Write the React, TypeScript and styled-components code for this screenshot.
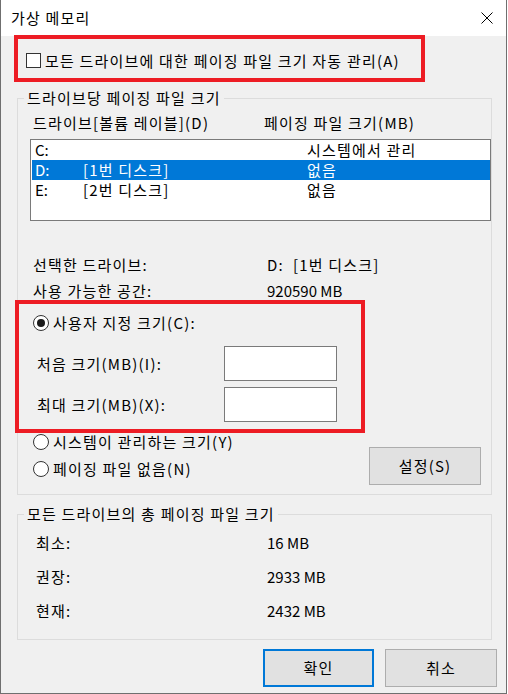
import { Fragment } from "react";
import styled, { createGlobalStyle } from "styled-components";

const GlobalStyle = createGlobalStyle`
  html, body {
    margin: 0;
    padding: 0;
    background: #ffffff;
  }
  body {
    font-family: "Noto Sans CJK KR", "Noto Sans", sans-serif;
    font-size: 15px;
    letter-spacing: 1.2px;
    color: #000;
  }
`;

const Window = styled.div`
  position: relative;
  width: 507px;
  height: 694px;
  box-sizing: border-box;
  border: 1px solid #6f6f6f;
  border-top: none;
  background: #f0f0f0;
  display: flex;
  flex-direction: column;
`;

const TitleBar = styled.div`
  height: 36px;
  flex-shrink: 0;
  background: #ffffff;
  display: flex;
  align-items: center;
  justify-content: space-between;
  padding: 0 13px 0 10px;
  line-height: 20px;
`;

const Body = styled.div`
  flex: 1;
  padding: 14px 0 0 16px;
  line-height: 20px;
`;

// numbers keep their natural width; only hangul runs get the extra spacing
const Num = styled.span`
  letter-spacing: 0;
`;

const CheckRow = styled.label`
  display: flex;
  align-items: center;
  height: 21px;
  padding-left: 9px;
  gap: 4px;
`;

const CheckBox = styled.span`
  width: 15px;
  height: 15px;
  box-sizing: border-box;
  border: 1px solid #333;
  background: #fff;
`;

const GroupBox = styled.fieldset<{ $top: number }>`
  margin: ${({ $top }) => $top}px 0 0;
  width: 475px;
  box-sizing: border-box;
  border: 1px solid #dcdcdc;
  padding: 0;
  min-width: 0;
`;

const Legend = styled.legend`
  padding: 0 3px;
  margin-left: 6px;
  line-height: 20px;
`;

const GroupBody = styled.div<{ $pad: string }>`
  padding: ${({ $pad }) => $pad};
`;

const HeaderRow = styled.div`
  display: grid;
  grid-template-columns: 231px 1fr;
  height: 20px;
`;

const ListBox = styled.div`
  margin: 6px 0 0 -3px;
  width: 461px;
  height: 82px;
  box-sizing: border-box;
  border: 1px solid #7a7a7a;
  background: #fff;
  padding: 0 0 0 1px;
`;

const ListRow = styled.div<{ $selected?: boolean }>`
  display: grid;
  grid-template-columns: 48px 224px 1fr;
  height: 20px;
  padding-left: 3px;
  background: ${({ $selected }) => ($selected ? "#0078d7" : "transparent")};
  color: ${({ $selected }) => ($selected ? "#fff" : "#000")};
`;

const InfoGrid = styled.div`
  margin-top: 31px;
  display: grid;
  grid-template-columns: 234px 1fr;
  grid-auto-rows: 26px;
  align-items: center;
`;

const RadioRow = styled.label<{ $h: number }>`
  display: flex;
  align-items: center;
  height: ${({ $h }) => $h}px;
  gap: 4px;
`;

const RadioDot = styled.span<{ $checked?: boolean }>`
  width: 16px;
  height: 16px;
  box-sizing: border-box;
  border-radius: 50%;
  border: 1px solid #333;
  background: #fff;
  display: flex;
  align-items: center;
  justify-content: center;

  &::after {
    content: "";
    width: 8px;
    height: 8px;
    border-radius: 50%;
    background: ${({ $checked }) => ($checked ? "#1a1a1a" : "transparent")};
  }
`;

const CustomBlock = styled.div`
  margin-top: 6px;
`;

const FieldRow = styled.div<{ $top: number }>`
  display: grid;
  grid-template-columns: 191px 113px;
  align-items: center;
  margin-top: ${({ $top }) => $top}px;
`;

const FieldLabel = styled.span`
  padding-left: 4px;
`;

const SizeInput = styled.input`
  width: 113px;
  height: 35px;
  box-sizing: border-box;
  border: 1px solid #7a7a7a;
  background: #fff;
  outline: none;
  font: inherit;
`;

const LowerRow = styled.div`
  display: flex;
  justify-content: space-between;
  margin: 10px 10px 9px 0;
`;

const RadioCol = styled.div`
  display: flex;
  flex-direction: column;
  gap: 7px;
`;

const Button = styled.button<{ $w: number; $primary?: boolean }>`
  width: ${({ $w }) => $w}px;
  height: 38px;
  box-sizing: border-box;
  background: #e1e1e1;
  border: ${({ $primary }) => ($primary ? "2px solid #0078d7" : "1px solid #adadad")};
  font: inherit;
  letter-spacing: inherit;
  color: #000;
  padding: 0;
`;

const SetButton = styled(Button)`
  margin-top: 15px;
`;

const TotalGrid = styled.div`
  padding: 9px 0 18px 18px;
  display: grid;
  grid-template-columns: 231px 1fr;
  grid-auto-rows: 20px;
  row-gap: 14px;
`;

const ButtonRow = styled.div`
  display: flex;
  justify-content: flex-end;
  gap: 11px;
  margin-top: 9px;
  padding-right: 9px;
`;

const RedBox = styled.div<{ $l: number; $t: number; $w: number; $h: number }>`
  position: absolute;
  left: ${({ $l }) => $l}px;
  top: ${({ $t }) => $t}px;
  width: ${({ $w }) => $w}px;
  height: ${({ $h }) => $h}px;
  box-sizing: border-box;
  border: 4px solid #ed1c24;
  pointer-events: none;
`;

const CloseIcon = () => (
  <svg width="12" height="12" viewBox="0 0 12 12">
    <path d="M0.5 0.5 L11.5 11.5 M11.5 0.5 L0.5 11.5" stroke="#000" strokeWidth="1" fill="none" />
  </svg>
);

const drives = [
  { letter: "C:", label: "", size: "시스템에서 관리" },
  { letter: "D:", label: "[1번 디스크]", size: "없음", selected: true },
  { letter: "E:", label: "[2번 디스크]", size: "없음" },
];

const totals = [
  ["최소:", "16 MB"],
  ["권장:", "2933 MB"],
  ["현재:", "2432 MB"],
];

export default function App() {
  return (
    <>
      <GlobalStyle />
      <Window>
        <TitleBar>
          <span>가상 메모리</span>
          <CloseIcon />
        </TitleBar>
        <Body>
          <CheckRow>
            <CheckBox />
            모든 드라이브에 대한 페이징 파일 크기 자동 관리(A)
          </CheckRow>

          <GroupBox $top={17}>
            <Legend>드라이브당 페이징 파일 크기</Legend>
            <GroupBody $pad="5px 0 0 15px">
              <HeaderRow>
                <span>드라이브[볼륨 레이블](D)</span>
                <span>페이징 파일 크기(MB)</span>
              </HeaderRow>
              <ListBox>
                {drives.map((d) => (
                  <ListRow key={d.letter} $selected={d.selected}>
                    <Num>{d.letter}</Num>
                    <span>{d.label}</span>
                    <span>{d.size}</span>
                  </ListRow>
                ))}
              </ListBox>
              <InfoGrid>
                <span>선택한 드라이브:</span>
                <span>D:&nbsp;&nbsp;[1번 디스크]</span>
                <span>사용 가능한 공간:</span>
                <Num>920590 MB</Num>
              </InfoGrid>
              <CustomBlock>
                <RadioRow $h={26}>
                  <RadioDot $checked />
                  사용자 지정 크기(C):
                </RadioRow>
                <FieldRow $top={10}>
                  <FieldLabel>처음 크기(MB)(I):</FieldLabel>
                  <SizeInput />
                </FieldRow>
                <FieldRow $top={6}>
                  <FieldLabel>최대 크기(MB)(X):</FieldLabel>
                  <SizeInput />
                </FieldRow>
              </CustomBlock>
              <LowerRow>
                <RadioCol>
                  <RadioRow $h={20}>
                    <RadioDot />
                    시스템이 관리하는 크기(Y)
                  </RadioRow>
                  <RadioRow $h={20}>
                    <RadioDot />
                    페이징 파일 없음(N)
                  </RadioRow>
                </RadioCol>
                <SetButton $w={112}>설정(S)</SetButton>
              </LowerRow>
            </GroupBody>
          </GroupBox>

          <GroupBox $top={9}>
            <Legend>모든 드라이브의 총 페이징 파일 크기</Legend>
            <TotalGrid>
              {totals.map(([k, v]) => (
                <Fragment key={k}>
                  <span>{k}</span>
                  <Num>{v}</Num>
                </Fragment>
              ))}
            </TotalGrid>
          </GroupBox>

          <ButtonRow>
            <Button $w={111} $primary>
              확인
            </Button>
            <Button $w={112}>취소</Button>
          </ButtonRow>
        </Body>
        <RedBox $l={13} $t={35} $w={411} $h={47} />
        <RedBox $l={14} $t={300} $w={350} $h={133} />
      </Window>
    </>
  );
}
